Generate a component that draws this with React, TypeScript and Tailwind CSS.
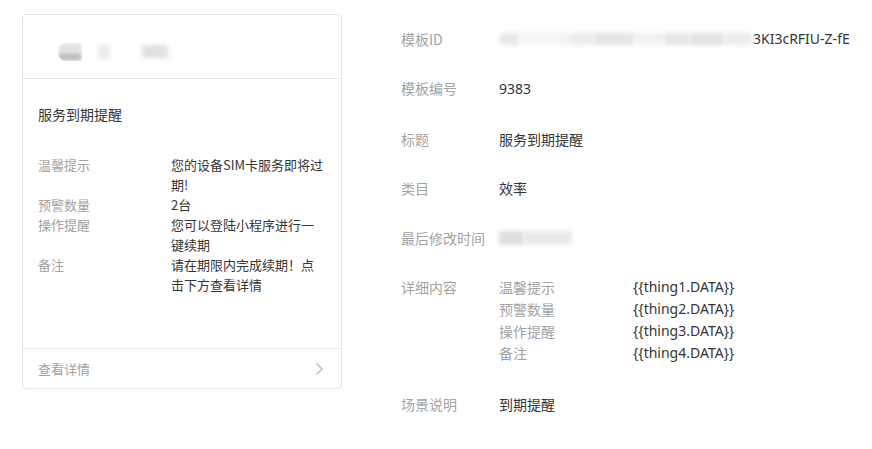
import React from "react";

const font = { fontFamily: '"Noto Sans CJK SC", "Noto Sans", sans-serif' };
const latin = { fontFamily: '"Noto Sans", "Noto Sans CJK SC", sans-serif' };

const cardRows: { label: string; value: string }[] = [
  { label: "温馨提示", value: "您的设备SIM卡服务即将过期!" },
  { label: "预警数量", value: "2台" },
  { label: "操作提醒", value: "您可以登陆小程序进行一键续期" },
  { label: "备注", value: "请在期限内完成续期！点击下方查看详情" },
];

const details = [
  { label: "温馨提示", value: "{{thing1.DATA}}" },
  { label: "预警数量", value: "{{thing2.DATA}}" },
  { label: "操作提醒", value: "{{thing3.DATA}}" },
  { label: "备注", value: "{{thing4.DATA}}" },
];

function Blur({ className }: { className: string }) {
  return <div className={`blur-[2px] ${className}`} />;
}

function Row({ label, children }: { label: string; children: React.ReactNode }) {
  return (
    <div className="flex text-[14px] leading-[20px]">
      <div className="w-[98px] shrink-0 text-[#a3a3a3]">{label}</div>
      <div className="text-[#353535]">{children}</div>
    </div>
  );
}

export default function App() {
  return (
    <div className="flex min-h-[449px] bg-white pl-[22px] pt-[14px]" style={font}>
      <div className="flex h-[375px] w-[320px] shrink-0 flex-col rounded-[4px] border border-[#e6e6e6]">
        <div className="flex h-[64px] shrink-0 items-center border-b border-[#e6e6e6] pl-[35px] pt-[10px]">
          <div className="flex items-center">
            <div className="flex h-[18px] w-[24px] flex-col overflow-hidden rounded-l-[8px]">
              <Blur className="h-[10px] bg-[#e2e2e2]" />
              <Blur className="h-[8px] bg-[#bdbdbd]" />
            </div>
            <Blur className="ml-[16px] h-[14px] w-[12px] bg-[#ececec]" />
            <Blur className="ml-[32px] h-[13px] w-[26px] bg-[#e1e1e1]" />
          </div>
        </div>
        <div className="flex flex-1 flex-col px-[15px]">
          <div className="mt-[25px] text-[14px] leading-[20px] text-[#353535]">服务到期提醒</div>
          <div className="mt-[31px] flex flex-col text-[13px] leading-[20px]">
            {cardRows.map((r) => (
              <div key={r.label} className="flex">
                <div className="w-[133px] shrink-0 text-[#a3a3a3]">{r.label}</div>
                <div className="w-[158px] text-[#353535]">{r.value}</div>
              </div>
            ))}
          </div>
        </div>
        <div className="flex h-[40px] shrink-0 items-center justify-between border-t border-[#e6e6e6] pl-[15px] pr-[17px]">
          <span className="text-[13px] text-[#a3a3a3]">查看详情</span>
          <svg width="9" height="14" viewBox="0 0 9 14" fill="none">
            <polyline points="1.5,1.5 7,7 1.5,12.5" stroke="#bcbcbc" strokeWidth="1.4" />
          </svg>
        </div>
      </div>

      <div className="ml-[59px] flex flex-col gap-[29.6px] pt-[14.5px]">
        <Row label="模板ID">
          <div className="flex items-center">
            <div className="flex h-[14px] w-[254px] items-center">
              <Blur className="h-[12px] w-[20px] rounded-l-[6px] bg-[#e8e8e8]" />
              <Blur className="h-[12px] w-[50px] bg-[#f4f4f4]" />
              <Blur className="h-[12px] w-[25px] bg-[#ececec]" />
              <Blur className="h-[12px] w-[40px] bg-[#e4e4e4]" />
              <Blur className="h-[12px] w-[30px] bg-[#f2f2f2]" />
              <Blur className="h-[12px] w-[25px] bg-[#e6e6e6]" />
              <Blur className="h-[12px] w-[35px] bg-[#e2e2e2]" />
              <Blur className="h-[12px] w-[29px] bg-[#ececec]" />
            </div>
            <span style={latin} className="text-[14px]">3KI3cRFIU-Z-fE</span>
          </div>
        </Row>
        <Row label="模板编号"><span style={latin}>9383</span></Row>
        <Row label="标题">服务到期提醒</Row>
        <Row label="类目">效率</Row>
        <Row label="最后修改时间">
          <div className="flex h-[20px] items-center">
            <Blur className="h-[14px] w-[25px] bg-[#dedede]" />
            <Blur className="h-[13px] w-[48px] bg-[#e8e8e8]" />
          </div>
        </Row>
        <div className="-mt-px flex text-[14px] leading-[22px]">
          <div className="w-[98px] shrink-0 text-[#a3a3a3]">详细内容</div>
          <div className="flex flex-col">
            {details.map((d) => (
              <div key={d.label} className="flex">
                <div className="w-[134px] shrink-0 text-[#a3a3a3]">{d.label}</div>
                <div className="text-[#353535]" style={latin}>{d.value}</div>
              </div>
            ))}
          </div>
        </div>
        <Row label="场景说明">到期提醒</Row>
      </div>
    </div>
  );
}
